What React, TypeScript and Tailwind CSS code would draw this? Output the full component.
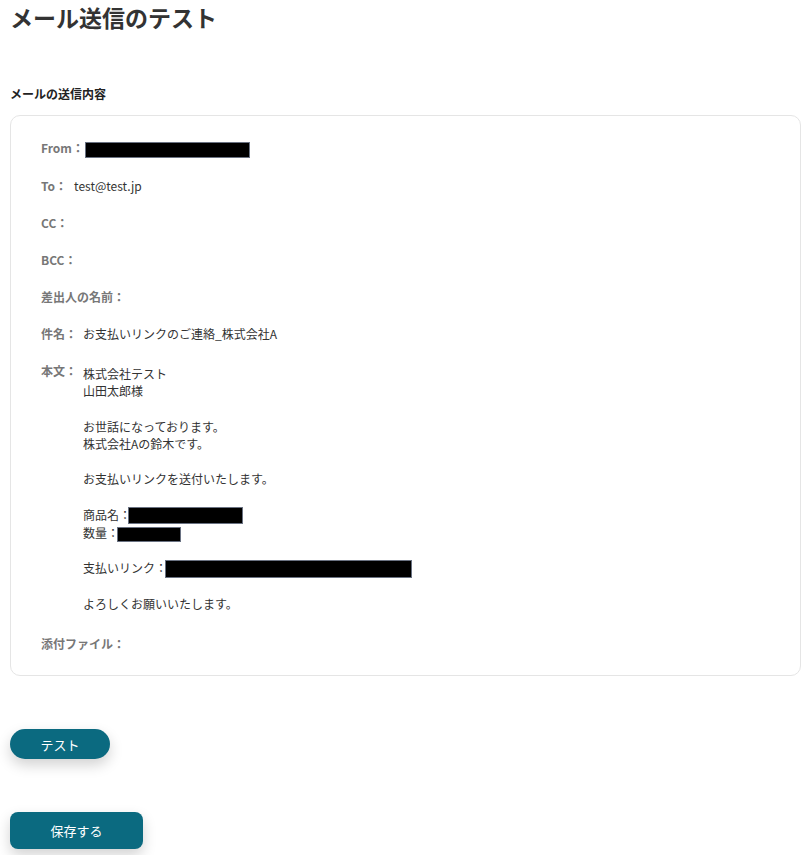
import React from "react";

const Redact = ({ w, h = 16 }: { w: number; h?: number }) => (
  <span
    className="inline-block bg-black border border-gray-500 align-middle"
    style={{ width: w, height: h }}
  />
);

const Row = ({ label, children }: { label: string; children?: React.ReactNode }) => (
  <div className="flex items-start leading-[18px]">
    <div className="text-[12px] font-bold text-[#777] whitespace-nowrap">{label}</div>
    <div className="text-[12px] text-[#333]">{children}</div>
  </div>
);

export default function App() {
  return (
    <div
      className="w-[812px] h-[855px] bg-white px-[10px] text-[#333]"
      style={{ fontFamily: '"Noto Sans CJK JP", "Noto Sans", sans-serif' }}
    >
      <h1 className="text-[23px] font-bold leading-[34px] pt-0 text-[#333]">メール送信のテスト</h1>
      <div className="mt-[51px] text-[12px] font-bold leading-[18px] text-[#222]">メールの送信内容</div>
      <div className="mt-[12px] w-[791px] border border-[#e5e5e5] rounded-[10px] pl-[30px] pr-4 pt-[23px] pb-[22px] flex flex-col gap-[19px]">
        <Row label="From：">
          <span className="ml-[1px]"><Redact w={165} h={16} /></span>
        </Row>
        <Row label="To：">
          <span className="ml-[7px]">test@test.jp</span>
        </Row>
        <Row label="CC：" />
        <Row label="BCC：" />
        <Row label="差出人の名前：" />
        <Row label="件名：">
          <span className="ml-[6px]">お支払いリンクのご連絡_株式会社A</span>
        </Row>
        <div className="flex items-start">
          <div className="text-[12px] font-bold text-[#777] leading-[18px]">本文：</div>
          <div className="ml-[6px] mt-[3px] mb-[4px] text-[12px] leading-[17.6px] text-[#333]">
            <div>株式会社テスト</div>
            <div>山田太郎様</div>
            <div className="h-[17.6px]" />
            <div>お世話になっております。</div>
            <div>株式会社Aの鈴木です。</div>
            <div className="h-[17.6px]" />
            <div>お支払いリンクを送付いたします。</div>
            <div className="h-[17.6px]" />
            <div className="flex items-center h-[18px]">商品名：<span className="-ml-[3px]"><Redact w={115} h={17} /></span></div>
            <div className="flex items-center h-[18px]">数量：<span className="-ml-[2px]"><Redact w={64} h={15} /></span></div>
            <div className="h-[17.6px]" />
            <div className="flex items-center h-[18px]">支払いリンク：<span className="-ml-[2px]"><Redact w={247} h={18} /></span></div>
            <div className="h-[17.6px]" />
            <div>よろしくお願いいたします。</div>
          </div>
        </div>
        <Row label="添付ファイル：" />
      </div>
      <button className="mt-[53px] block w-[100px] h-[30px] rounded-full bg-[#0b6a80] text-white text-[13px] shadow-[0_6px_14px_rgba(0,0,0,0.18)]">
        テスト
      </button>
      <button className="mt-[53px] block w-[133px] h-[37px] rounded-[8px] bg-[#0b6a80] text-white text-[13px] shadow-[0_6px_14px_rgba(0,0,0,0.18)]">
        保存する
      </button>
    </div>
  );
}
